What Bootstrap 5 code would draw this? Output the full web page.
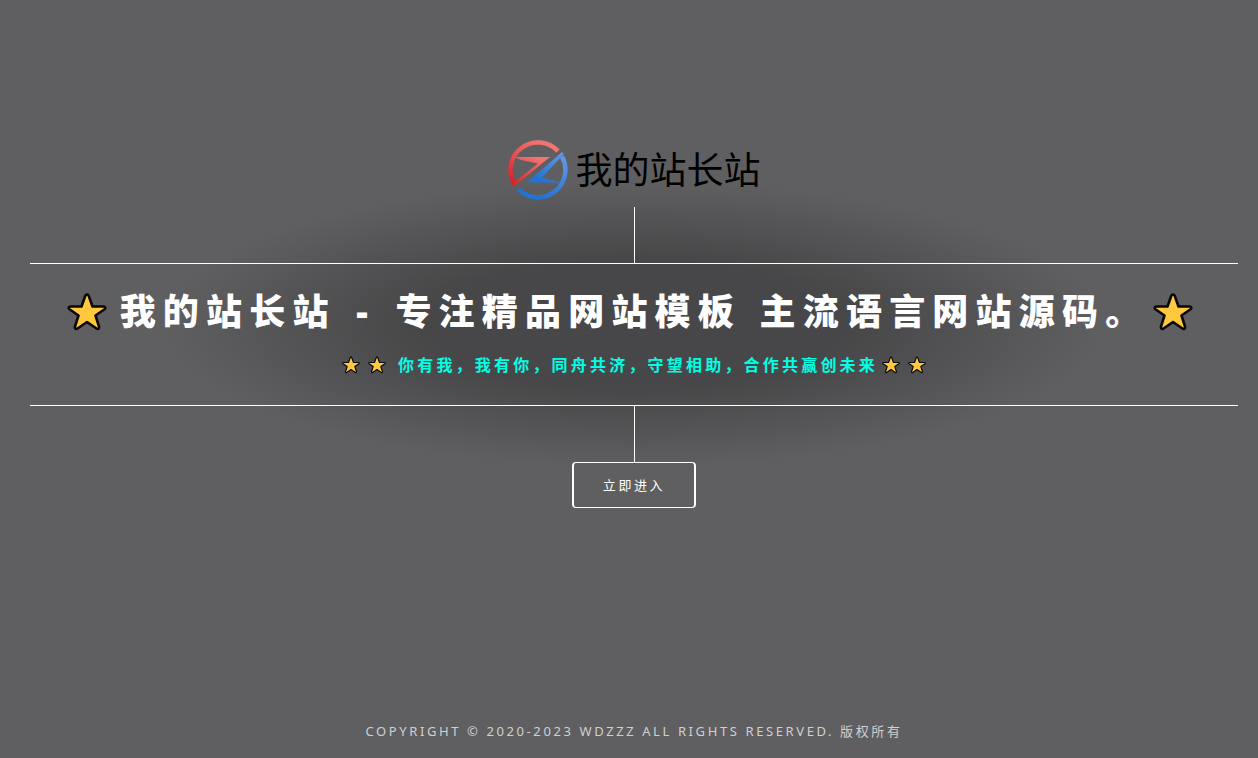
<!DOCTYPE html>
<html lang="zh-CN">
<head>
<meta charset="utf-8">
<meta name="viewport" content="width=device-width, initial-scale=1">
<title>我的站长站</title>
<link href="https://cdn.jsdelivr.net/npm/bootstrap@5.3.0/dist/css/bootstrap.min.css" rel="stylesheet">
<style>
body{background:#5f5f61;color:#fff;font-family:"Open Sans","Noto Sans CJK SC",sans-serif;padding:0 20px 0 30px}
.hero{background-image:radial-gradient(rgba(0,0,0,.25) 25%,rgba(0,0,0,0) 55%);margin-top:140px}
.brand{height:67px;padding-bottom:7px;gap:8px;color:#000}
.brand svg{width:60px;height:60px}
.brand-name{font-size:37px;line-height:60px;font-weight:400}
.stem{width:1px;height:56px;background:#fff}
.panel{border-top:1px solid #fff;border-bottom:1px solid #fff;padding:24px 0 29px}
.headline{font-size:36px;line-height:48px;font-weight:900;letter-spacing:.2em;margin:0 0 18px}
.headline .star{width:40px;height:40px;margin:0 13px 0 5px}
.headline .dash{padding:0 4px}
.headline .clause{padding-left:2px}
.motto{font-size:16px;line-height:22px;font-weight:700;letter-spacing:.2em;color:#00ffe5;margin:0}
.motto .star{width:18px;height:18px}
.stars{gap:8px}
.enter{--bs-btn-color:#fff;--bs-btn-border-color:#fff;--bs-btn-hover-color:#fff;--bs-btn-hover-bg:#777;--bs-btn-hover-border-color:#fff;border-width:1px 2px;border-radius:4px;font-size:13px;line-height:20px;letter-spacing:.2em;padding:12px 29px}
.legal{font-family:"Noto Sans","Noto Sans CJK SC",sans-serif;font-size:13px;line-height:18px;letter-spacing:.2em;color:#d0d0d1;padding-bottom:18px}
</style>
</head>
<body class="d-flex flex-column min-vh-100">
<svg class="d-none" aria-hidden="true">
  <symbol id="star" viewBox="0 0 40 40"><path d="M20 2.500Q21.200 2.500 21.800 4L25.500 14.500 36.500 14.500C38.500 14.500 38.800 16.300 37.500 17.300L28.500 23.500 32 34.500C32.500 36.500 31 37.500 29.500 36.500L20 30 10.500 36.500C9 37.500 7.500 36.500 8 34.500L11.500 23.500 2.500 17.300C1.200 16.300 1.500 14.500 3.500 14.500L14.500 14.500 18.200 4Q18.800 2.500 20 2.500Z" fill="#ffc83d" stroke="#0a0808" stroke-width="2.600" stroke-linejoin="round"/></symbol>
</svg>
<header class="hero d-flex flex-column align-items-center text-center">
  <div class="brand d-flex align-items-center">
    <svg viewBox="0 0 60 60" aria-hidden="true">
      <defs>
        <linearGradient id="red" x1="0" y1="1" x2=".6" y2="0"><stop stop-color="#d71f28"/><stop offset="1" stop-color="#f37272"/></linearGradient>
        <linearGradient id="blue" x1="1" y1="0" x2=".5" y2="1"><stop stop-color="#6599e6"/><stop offset="1" stop-color="#2472d2"/></linearGradient>
      </defs>
      <path d="M50 11.100A27.500 27.500 0 0 0 6 43.400" fill="none" stroke="url(#red)" stroke-width="4.500"/>
      <path d="M4 44 30 23.500 13 20 7 17 42 17 5 47Z" fill="url(#red)"/>
      <path d="M10.500 49.400A27.500 27.500 0 0 0 54 16.700" fill="none" stroke="url(#blue)" stroke-width="4.500"/>
      <path d="M56 14 34 37.500 53 42.500 19 42.500 54 12Z" fill="url(#blue)"/>
    </svg>
    <span class="brand-name">我的站长站</span>
  </div>
  <div class="stem"></div>
  <div class="panel w-100">
    <h1 class="headline d-flex justify-content-center align-items-center"><svg class="star flex-shrink-0"><use href="#star"/></svg><span>我的站长站 <span class="dash">-</span> 专注精品网站模板 <span class="clause">主流语言网站源码。</span></span><svg class="star flex-shrink-0"><use href="#star"/></svg></h1>
    <p class="motto d-flex justify-content-center align-items-center"><span class="stars d-flex me-2 pe-1"><svg class="star"><use href="#star"/></svg><svg class="star"><use href="#star"/></svg></span><span>你有我，我有你，同舟共济，守望相助，合作共赢创未来</span><span class="stars d-flex ms-1"><svg class="star"><use href="#star"/></svg><svg class="star"><use href="#star"/></svg></span></p>
  </div>
  <div class="stem"></div>
  <button type="button" class="btn enter">立即进入</button>
</header>
<footer class="legal mt-auto text-center">COPYRIGHT © 2020-2023 WDZZZ ALL RIGHTS RESERVED. 版权所有</footer>
<script src="https://cdn.jsdelivr.net/npm/bootstrap@5.3.0/dist/js/bootstrap.bundle.min.js"></script>
</body>
</html>
